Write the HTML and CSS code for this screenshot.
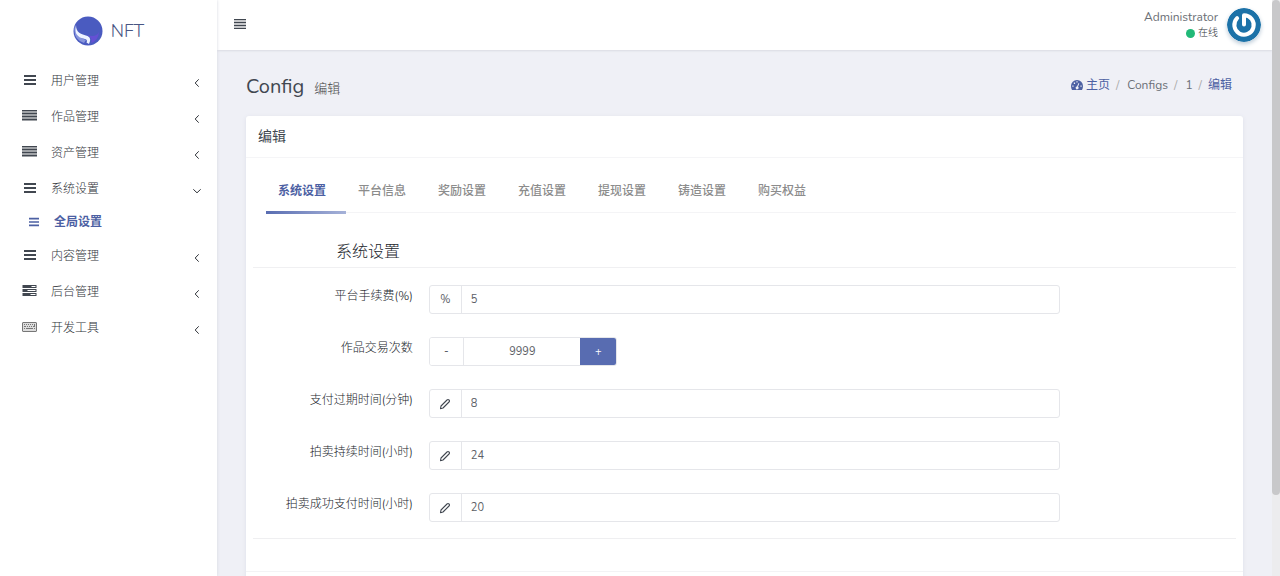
FILE: index.html
```html
<!DOCTYPE html>
<html lang="zh-CN">
<head>
<meta charset="utf-8">
<title>Config | 编辑</title>
<link rel="stylesheet" href="styles.css">
</head>
<body>
<svg class="defs" aria-hidden="true">
  <symbol id="bars" viewBox="0 0 12 12"><path d="M0 1h12v2H0zM0 5h12v2H0zM0 9h12v2H0z"/></symbol>
  <symbol id="justify" viewBox="0 0 15 12"><path opacity=".5" d="M0 0h15v11H0z"/><path d="M0 0h15v1H0zM0 3h15v1H0zM0 6h15v1H0zM0 9h15v1H0z"/></symbol>
  <symbol id="tasks" viewBox="0 0 14 12"><path fill-rule="evenodd" d="M0 0h14v3H0zM9 1v1h4V1zM0 4h14v3H0zM5 5v1h8V5zM0 8h14v3H0zM8 9v1h5V9z"/></symbol>
  <symbol id="keyboard" viewBox="0 0 15 10"><path opacity=".25" d="M1 1h13v8H1z"/><path fill="none" stroke="currentColor" d="M1 .5h13q.5 0 .5.5v8q0 .5-.5.5H1Q.5 9.500.5 9V1Q.5.5 1 .5z"/><path d="M2 2h1v1H2zM4 2h1v1H4zM6 2h1v1H6zM8 2h1v1H8zM10 2h1v1h-1zM12 2h1v3h-2V4h1zM2 4h2v1H2zM5 4h1v1H5zM7 4h1v1H7zM9 4h1v1H9zM2 6h1v1H2zM4 6h7v1H4zM12 6h1v1h-1z"/></symbol>
  <symbol id="chevron" viewBox="0 0 8 8"><path fill="none" stroke="currentColor" stroke-width="1" d="M5.700.3 2.200 4l3.500 3.700"/></symbol>
  <symbol id="pencil" viewBox="0 0 12 12"><path fill="none" stroke="currentColor" stroke-width="1.100" stroke-linejoin="round" d="M1.500 10.700 2 8 8 2q1-1 2 0t0 2L4 10z"/></symbol>
</svg>
<div class="app">
  <aside class="sidebar">
    <a class="brand" href="#">
      <svg class="brand-logo" viewBox="0 0 30 30" aria-hidden="true"><circle cx="15" cy="15" r="14.500" fill="#4a5bc0"/><path fill="#6450d4" d="M14 19q9 3 12-3-1 9-8 11 2-5-4-8z"/><path fill="#8795dc" d="M2 9Q-1 23 11 27l2-3Q2 21 2 9z"/><path fill="#eef3ff" d="M3 9Q0 21 12 23q3 1 1.500 3.500l2.500 1.500q3-6-1.500-8C8 18 3 17 3 9z"/></svg>
      <span>NFT</span>
    </a>
    <nav class="menu">
      <a class="item" href="#"><svg class="ico"><use href="#bars"/></svg><span>用户管理</span><svg class="arrow"><use href="#chevron"/></svg></a>
      <a class="item" href="#"><svg class="ico wide"><use href="#justify"/></svg><span>作品管理</span><svg class="arrow"><use href="#chevron"/></svg></a>
      <a class="item" href="#"><svg class="ico wide"><use href="#justify"/></svg><span>资产管理</span><svg class="arrow"><use href="#chevron"/></svg></a>
      <a class="item" href="#"><svg class="ico"><use href="#bars"/></svg><span>系统设置</span><svg class="arrow open"><use href="#chevron"/></svg></a>
      <a class="item sub" href="#"><svg class="ico"><use href="#bars"/></svg><span>全局设置</span></a>
      <a class="item" href="#"><svg class="ico"><use href="#bars"/></svg><span>内容管理</span><svg class="arrow"><use href="#chevron"/></svg></a>
      <a class="item" href="#"><svg class="ico wide"><use href="#tasks"/></svg><span>后台管理</span><svg class="arrow"><use href="#chevron"/></svg></a>
      <a class="item" href="#"><svg class="ico wide light"><use href="#keyboard"/></svg><span>开发工具</span><svg class="arrow"><use href="#chevron"/></svg></a>
    </nav>
  </aside>
  <div class="main">
    <header class="topbar">
      <button class="toggle" type="button" aria-label="菜单"><svg viewBox="0 0 12 10"><path opacity=".3" d="M0 0h12v10H0z"/><path d="M0 0h12v1H0zM0 3h12v1H0zM0 6h12v1H0zM0 9h12v1H0z"/></svg></button>
      <div class="user">
        <div class="user-text"><span>Administrator</span><span class="status"><i class="dot"></i>在线</span></div>
        <svg class="avatar" viewBox="0 0 34 34" aria-hidden="true"><circle cx="17" cy="17" r="17" fill="#1c72a8"/><path fill="none" stroke="#fff" stroke-width="4" stroke-linejoin="round" stroke-linecap="round" d="M17 16.500V7.300A9.700 9.700 0 1 1 10.100 10.200"/></svg>
      </div>
    </header>
    <main class="content">
      <div class="page-head">
        <h1>Config<small>编辑</small></h1>
        <nav class="crumbs">
          <a href="#"><svg viewBox="0 0 12 10" aria-hidden="true"><path fill-rule="evenodd" d="M1 10Q0 8.500 0 6a6 6 0 0 1 12 0q0 2.500-1 4zM1.300 5.500v1.300h1.300V5.500zM2.800 2.600v1.300h1.300V2.600zM5.400 1.200v1.300h1.200V1.200zM9.400 5.500v1.300h1.300V5.500zM7.500 3 6 6.500a1.400 1.400 0 1 0 1 .3L8.300 3.400z"/></svg>主页</a>
          <i>/</i><span>Configs</span><i>/</i><span>1</span><i>/</i><a href="#">编辑</a>
        </nav>
      </div>
      <section class="card">
        <h2 class="card-title">编辑</h2>
        <form class="form">
          <div class="tabs" role="tablist">
            <button class="tab active" type="button" role="tab">系统设置</button>
            <button class="tab" type="button" role="tab">平台信息</button>
            <button class="tab" type="button" role="tab">奖励设置</button>
            <button class="tab" type="button" role="tab">充值设置</button>
            <button class="tab" type="button" role="tab">提现设置</button>
            <button class="tab" type="button" role="tab">铸造设置</button>
            <button class="tab" type="button" role="tab">购买权益</button>
          </div>
          <h3 class="section-title">系统设置</h3>
          <div class="fields">
            <div class="row"><label for="fee">平台手续费(%)</label><div class="group"><span class="addon">%</span><input id="fee" type="text" value="5"></div></div>
            <div class="row"><label for="times">作品交易次数</label><div class="group number"><button class="step" type="button">-</button><input id="times" type="text" value="9999"><button class="step plus" type="button">+</button></div></div>
            <div class="row"><label for="expire">支付过期时间(分钟)</label><div class="group"><span class="addon"><svg><use href="#pencil"/></svg></span><input id="expire" type="text" value="8"></div></div>
            <div class="row"><label for="last">拍卖持续时间(小时)</label><div class="group"><span class="addon"><svg><use href="#pencil"/></svg></span><input id="last" type="text" value="24"></div></div>
            <div class="row"><label for="pay">拍卖成功支付时间(小时)</label><div class="group"><span class="addon"><svg><use href="#pencil"/></svg></span><input id="pay" type="text" value="20"></div></div>
          </div>
        </form>
        <footer class="card-foot"></footer>
      </section>
    </main>
  </div>
  <div class="rail"><div class="thumb"></div></div>
</div>
</body>
</html>
```
FILE: styles.css
```css
* { box-sizing: border-box; }
body { margin: 0; background: #eff0f6; color: #414750; font: 12px/18px Nunito, "Noto Sans", "Noto Sans CJK SC", sans-serif; }
a { color: inherit; text-decoration: none; }
button, input { font: inherit; color: inherit; }
svg { fill: currentColor; flex: none; }
.defs { display: none; }
.app { display: flex; height: 100vh; overflow: hidden; }

.sidebar { flex: none; width: 217px; background: #fff; box-shadow: 0 0 3px #d5d7e0; z-index: 1; }
.brand { display: flex; align-items: center; justify-content: center; gap: 8px; height: 62px; font-size: 18px; font-weight: 300; color: #485583; }
.brand-logo { width: 30px; height: 30px; }
.item { display: flex; align-items: center; height: 36px; padding: 1px 16px 0 22px; font-weight: 300; color: #30343a; }
.item span { flex: 1; }
.ico { width: 12px; height: 12px; margin: 0 15px 2px 2px; color: #414750; }
.ico.wide { width: 15px; margin: 0 14px 2px 0; }
.ico.light { height: 10px; color: #777; }
.arrow { width: 8px; height: 8px; margin-top: 4px; }
.arrow.open { transform: rotate(-90deg); }
.item.sub { height: 31px; padding: 0 16px 0 28px; color: #4c60a3; font-weight: 700; }
.sub .ico { width: 12px; height: 10px; margin: 0 14px 0 0; color: #4c60a3; }

.main { flex: 1; min-width: 0; }
.topbar { display: flex; justify-content: space-between; align-items: center; height: 50px; padding: 0 11px 0 17px; background: #fff; box-shadow: 0 1px 2px #d9dbe2; }
.toggle { display: flex; padding: 0 0 2px; border: 0; background: none; }
.toggle svg { width: 12px; height: 10px; }
.user { display: flex; align-items: center; gap: 9px; color: #6b6f76; }
.user-text { display: flex; flex-direction: column; align-items: flex-end; line-height: 16px; }
.status { display: flex; align-items: center; gap: 3px; font-size: 10px; font-weight: 300; color: #30343a; }
.dot { width: 9px; height: 9px; border-radius: 50%; background: #21b978; }
.avatar { width: 34px; height: 34px; border-radius: 50%; box-shadow: 0 2px 4px #bccbd8; }

.content { padding: 22px 29px 0; }
.page-head { display: flex; justify-content: space-between; height: 44px; padding-right: 11px; }
h1 { margin: 0; font-size: 20px; line-height: 30px; font-weight: 400; color: #414750; }
h1 small { margin-left: 10px; font-size: 13px; font-weight: 300; color: #444; }
.crumbs { display: flex; gap: 6px; height: 26px; align-items: center; color: #6b6f76; }
.crumbs a { display: flex; align-items: center; gap: 3px; color: #4c60a3; }
.crumbs svg { width: 12px; height: 10px; }
.crumbs i { color: #aaa; font-style: normal; }
.crumbs span { padding-left: 2px; }

.card { min-height: 500px; background: #fff; border-radius: 3px; box-shadow: 0 1px 4px #dddfe8; }
.card-title { margin: 0; padding: 0 12px; height: 42px; line-height: 41px; font-size: 14px; font-weight: 400; border-bottom: 1px solid #f5f5f7; }
.form { padding: 14px 7px 0; }
.tabs { display: flex; margin-left: 13px; height: 41px; border-bottom: 1px solid #f4f4f6; }
.tab { height: 42px; padding: 0 20px 2px 12px; border: 0; border-bottom: 3px solid transparent; background: none; color: #8c8c8c; font-weight: 500; white-space: nowrap; }
.tab.active { color: #4c60a3; font-weight: 700; border-image: linear-gradient(90deg, #586cb1, #a7b3d9) 1; border-width: 0 0 3px; }
.section-title { margin: 0; padding: 21px 0 0 83px; height: 55px; font-size: 16px; line-height: 36px; font-weight: 300; color: #22262c; border-bottom: 1px solid #f0f0f2; }
.fields { display: grid; gap: 23px; padding: 17px 0 16px; border-bottom: 1px solid #efeff1; }
.row { display: grid; grid-template-columns: minmax(0, 2fr) minmax(0, 8fr) minmax(0, 2fr); height: 29px; }
.row label { padding: 2px 4px 0 0; text-align: right; font-weight: 300; color: #22262c; white-space: nowrap; }
.group { display: flex; margin: 0 12px; border: 1px solid #e5e6ea; border-radius: 3px; font-size: 11px; color: #5c6066; overflow: hidden; }
.group input { flex: 1; min-width: 0; padding: 0 9px; border: 0; background: none; }
.addon { display: flex; align-items: center; justify-content: center; width: 32px; border-right: 1px solid #e5e6ea; }
.addon svg { width: 12px; height: 12px; color: #414750; }
.number { width: 188px; }
.number input { text-align: center; }
.step { width: 34px; padding: 0; border: 0; border-right: 1px solid #e5e6ea; background: #fff; }
.step.plus { width: 37px; margin: -1px; border: 0; background: #586cb1; color: #fff; }
.card-foot { margin-top: 32px; border-top: 1px solid #f3f3f5; }

.rail { flex: none; width: 8px; background: #ececee; }
.thumb { height: 86%; border-radius: 4px; background: #c8c8ca; }
```
